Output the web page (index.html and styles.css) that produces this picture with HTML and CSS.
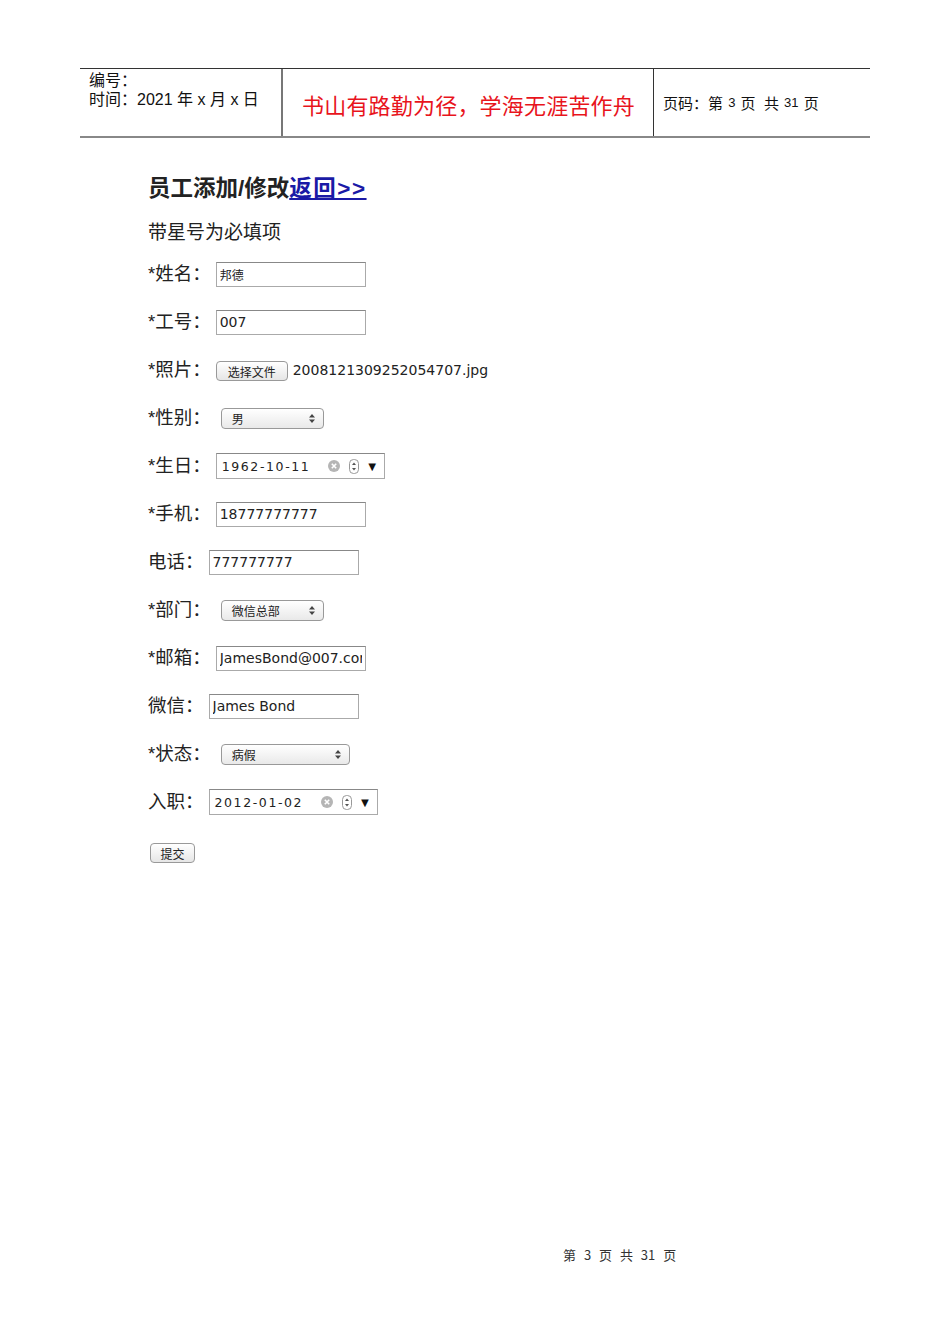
FILE: index.html
```html
<!DOCTYPE html>
<html lang="zh-CN">
<head>
  <meta charset="UTF-8">
  <meta name="viewport" content="width=device-width, initial-scale=1.0">
  <title>员工添加/修改</title>
  <link rel="stylesheet" href="styles.css">
</head>
<body>
  <div class="page-header">
    <div class="cell cell-left">
      <div>编号：</div>
      <div>时间：2021 年 x 月 x 日</div>
    </div>
    <div class="cell cell-motto">书山有路勤为径，学海无涯苦作舟</div>
    <div class="cell cell-page">页码：第 <span class="num">3</span> 页&nbsp; 共 <span class="num">31</span> 页</div>
  </div>

  <div class="form-container">
    <h1>员工添加/修改<a href="#">返回&gt;&gt;</a></h1>
    <p class="hint">带星号为必填项</p>

    <form id="staff-form">
      <div class="row">
        <label>*姓名：</label>
        <input type="text" class="field cn" value="邦德">
      </div>
      <div class="row">
        <label>*工号：</label>
        <input type="text" class="field" value="007">
      </div>
      <div class="row">
        <label>*照片：</label>
        <span class="btn file-btn">选择文件</span>
        <span class="file-name">2008121309252054707.jpg</span>
      </div>
      <div class="row">
        <label>*性别：</label>
        <span class="select sel-short"><span>男</span><svg class="arrows" width="6" height="9" viewBox="0 0 6 9"><path d="M0 3.5 L3 0 L6 3.5 Z M0 5.5 L3 9 L6 5.5 Z" fill="#444"/></svg></span>
      </div>
      <div class="row">
        <label>*生日：</label>
        <span class="date-box">
          <span class="date-text">1962-10-11</span>
          <svg class="clear" width="12" height="12" viewBox="0 0 12 12"><circle cx="6" cy="6" r="6" fill="#b5b5b5"/><path d="M3.8 3.8 L8.2 8.2 M8.2 3.8 L3.8 8.2" stroke="#fff" stroke-width="1.6"/></svg>
          <svg class="spin" width="10" height="15" viewBox="0 0 10 15"><rect x="0.5" y="0.5" width="9" height="14" rx="4" fill="#fff" stroke="#999"/><path d="M3 6 L5 3.5 L7 6 Z M3 9 L5 11.5 L7 9 Z" fill="#555"/></svg>
          <span class="drop">▼</span>
        </span>
      </div>
      <div class="row">
        <label>*手机：</label>
        <input type="text" class="field" value="18777777777">
      </div>
      <div class="row">
        <label>电话：</label>
        <input type="text" class="field" value="777777777">
      </div>
      <div class="row">
        <label>*部门：</label>
        <span class="select sel-short"><span>微信总部</span><svg class="arrows" width="6" height="9" viewBox="0 0 6 9"><path d="M0 3.5 L3 0 L6 3.5 Z M0 5.5 L3 9 L6 5.5 Z" fill="#444"/></svg></span>
      </div>
      <div class="row">
        <label>*邮箱：</label>
        <input type="text" class="field" value="JamesBond@007.com">
      </div>
      <div class="row">
        <label>微信：</label>
        <input type="text" class="field" value="James Bond">
      </div>
      <div class="row">
        <label>*状态：</label>
        <span class="select sel-long"><span>病假</span><svg class="arrows" width="6" height="9" viewBox="0 0 6 9"><path d="M0 3.5 L3 0 L6 3.5 Z M0 5.5 L3 9 L6 5.5 Z" fill="#444"/></svg></span>
      </div>
      <div class="row">
        <label>入职：</label>
        <span class="date-box">
          <span class="date-text">2012-01-02</span>
          <svg class="clear" width="12" height="12" viewBox="0 0 12 12"><circle cx="6" cy="6" r="6" fill="#b5b5b5"/><path d="M3.8 3.8 L8.2 8.2 M8.2 3.8 L3.8 8.2" stroke="#fff" stroke-width="1.6"/></svg>
          <svg class="spin" width="10" height="15" viewBox="0 0 10 15"><rect x="0.5" y="0.5" width="9" height="14" rx="4" fill="#fff" stroke="#999"/><path d="M3 6 L5 3.5 L7 6 Z M3 9 L5 11.5 L7 9 Z" fill="#555"/></svg>
          <span class="drop">▼</span>
        </span>
      </div>
      <div class="row row-submit">
        <button type="submit" class="btn submit-btn">提交</button>
      </div>
    </form>
  </div>

  <div class="page-footer">第 3 页 共 31 页</div>
</body>
</html>
```

FILE: styles.css
```css
body {
  margin: 0;
  padding: 0;
  width: 950px;
  height: 1344px;
  display: flex;
  flex-direction: column;
  font-family: "Liberation Sans", "Noto Sans CJK SC", sans-serif;
  color: #222;
  background: #fff;
}

/* page header table */
.page-header {
  margin: 68px 0 0 80px;
  width: 790px;
  height: 67px;
  display: grid;
  grid-template-columns: 201px 373px 216px;
  border-top: 1px solid #333;
  border-bottom: 2px solid #888;
}

.cell {
  font-size: 15px;
  color: #111;
}

.cell-left {
  padding: 2px 0 0 9px;
  font-size: 16px;
  line-height: 19px;
}

.cell-motto {
  border-left: 2px solid #777;
  border-right: 1px solid #333;
  padding-left: 19px;
  display: flex;
  align-items: center;
  padding-top: 2px;
  font-size: 22px;
  color: #e8141c;
  letter-spacing: 0.2px;
}

.cell-page {
  padding-left: 9px;
  display: flex;
  align-items: center;
  white-space: pre;
}

.cell-page .num {
  font-size: 13px;
  margin: 0 1px;
}

/* form */
.form-container {
  padding: 36px 0 0 148px;
}

h1 {
  margin: 0;
  font-size: 22.5px;
  line-height: 30px;
  font-weight: bold;
  color: #222;
}

h1 a {
  color: #1a1aa6;
  text-decoration: underline;
  letter-spacing: 1.5px;
}

.hint {
  margin: 17px 0 5px;
  font-size: 19px;
  line-height: 24px;
}

.row {
  height: 48px;
  display: flex;
  align-items: center;
}

.row label {
  font-size: 18.5px;
  margin-right: 5px;
  margin-top: -4px;
  white-space: nowrap;
}

.field {
  box-sizing: border-box;
  width: 150px;
  height: 25px;
  margin: 0;
  padding: 0 3px;
  border: 1px solid #aaa;
  border-top-color: #888;
  font-family: "DejaVu Sans", sans-serif;
  font-size: 14px;
  color: #222;
  background: #fff;
  outline: none;
}

.field.cn {
  font-family: "Noto Sans CJK SC", sans-serif;
  font-size: 12px;
}

.btn {
  box-sizing: border-box;
  height: 20px;
  display: inline-flex;
  align-items: center;
  justify-content: center;
  border: 1px solid #999;
  border-radius: 4px;
  background: linear-gradient(#fff, #e6e6e6);
  font-family: "Noto Sans CJK SC", sans-serif;
  font-size: 12px;
  color: #222;
  padding: 0;
}

.file-btn {
  width: 72px;
  margin-top: 2px;
}

.file-name {
  margin: 0 0 0 5px;
  font-family: "DejaVu Sans", sans-serif;
  font-size: 14px;
}

.select {
  box-sizing: border-box;
  height: 21px;
  margin-left: 5px;
  padding: 0 8px 0 10px;
  display: inline-flex;
  align-items: center;
  justify-content: space-between;
  border: 1px solid #999;
  border-radius: 4px;
  background: linear-gradient(#fff, #e9e9e9);
  font-family: "Noto Sans CJK SC", sans-serif;
  font-size: 12px;
  color: #222;
}

.sel-short { width: 103px; }
.sel-long { width: 129px; }

.date-box {
  box-sizing: border-box;
  width: 169px;
  height: 26px;
  padding: 0 5px;
  display: inline-flex;
  align-items: center;
  border: 1px solid #aaa;
  border-top-color: #888;
  background: #fff;
}

.date-text {
  font-family: "DejaVu Sans", sans-serif;
  font-size: 12.5px;
  letter-spacing: 1.6px;
  color: #222;
  width: 106px;
}

.spin { margin-left: 9px; }

.drop {
  margin-left: 7px;
  font-size: 13px;
  color: #111;
}

.row-submit {
  margin-top: 3px;
}

.submit-btn {
  width: 45px;
  margin-left: 2px;
}

/* footer */
.page-footer {
  margin: auto 0 80px 563px;
  font-family: "Noto Sans CJK SC", sans-serif;
  font-size: 13px;
  color: #333;
  word-spacing: 5px;
}
```
